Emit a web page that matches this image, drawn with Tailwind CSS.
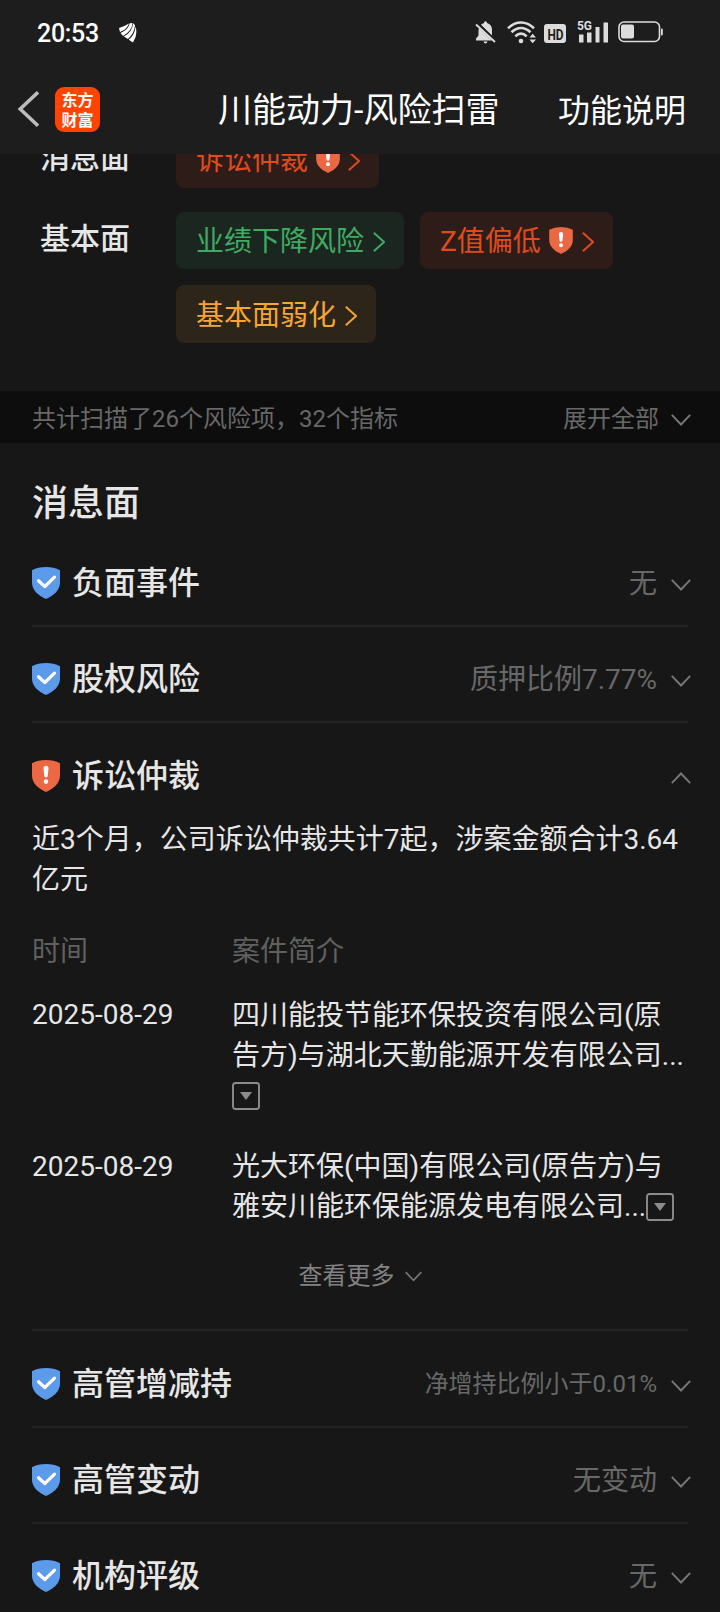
<!DOCTYPE html>
<html lang="zh-CN">

<head>
    <meta charset="UTF-8">
    <meta name="viewport" content="width=device-width, initial-scale=1.0">
    <title>川能动力-风险扫雷</title>
    <script src="https://cdn.jsdelivr.net/npm/@tailwindcss/browser@4"></script>
</head>

<body class="bg-[#171717] text-[#e6e6e6] font-[Roboto,'Noto_Sans_CJK_SC',sans-serif] h-[1612px] overflow-hidden">
<!-- 图标定义 -->
<svg class="hidden">
    <symbol id="shield-ok" viewBox="0 0 28 32">
        <path d="M0 3.2Q6 0 14 0T28 3.2V15.500C28 23.500 21 29 14 32C7 29 0 23.500 0 15.500Z" fill="#5c9aea"/>
        <path d="M6.500 13.800L12.800 19.500L22.500 10.200" fill="none" stroke="#fff" stroke-width="3.200" stroke-linecap="round" stroke-linejoin="round"/>
    </symbol>
    <symbol id="shield-warn" viewBox="0 0 28 32">
        <path d="M0 3.2Q6 0 14 0T28 3.2V15.500C28 23.500 21 29 14 32C7 29 0 23.500 0 15.500Z" fill="#ea6843"/>
        <path d="M11.500 8.300a2.500 2.500 0 0 1 5 0L15.800 15.800a1.800 1.800 0 0 1-3.600 0Z" fill="#fff"/>
        <circle cx="14" cy="21.600" r="2.300" fill="#fff"/>
    </symbol>
    <symbol id="down" viewBox="0 0 20 12">
        <path d="M.8 .8L10 10.500L19.200 .8" fill="none" stroke="currentColor" stroke-width="1.900"/>
    </symbol>
    <symbol id="right" viewBox="0 0 12 20">
        <path d="M.8 .8L11 10L.8 19.200" fill="none" stroke="currentColor" stroke-width="1.900"/>
    </symbol>
    <symbol id="more" viewBox="0 0 28 28">
        <rect x="1" y="1" width="26" height="26" rx="2.500" fill="none" stroke="#8c8c8c" stroke-width="1.900"/>
        <path d="M8 10H20L14 18Z" fill="#8c8c8c"/>
    </symbol>
</svg>

<header class="bg-[#1d1d1d] h-[154px]">
    <!-- 状态栏 -->
    <div class="h-16 flex items-center justify-between pl-[37px] pr-[57px]">
        <div class="flex items-center">
            <span class="text-[25px] leading-none font-medium text-white tracking-[-0.3px] w-[82px] pt-0.5">20:53</span>
            <svg class="w-[18px] h-[20px] mt-px" viewBox="0 0 18 20" fill="#fff">
                <path d="M0 5Q5 3.500 10 .5Q8 6.500 1 9Z"/>
                <path d="M10.700 .3L13.500 0Q13 8 4 13L1.500 9.900Q9.500 7 10.700 .3Z"/>
                <path d="M14.100 .2L16 2Q15.500 10 9 16L4.800 13.500Q13.500 9 14.100 .2Z"/>
                <path d="M16.600 3.500Q19 12 14 19.500L9.800 16.800Q16 11.500 16.600 3.500Z"/>
            </svg>
        </div>
        <div class="flex items-center text-[#dcdcdc]">
            <!-- 静音 -->
            <svg class="w-[21px] h-[23px]" viewBox="0 0 21 23" fill="currentColor">
                <path d="M6 3.800Q7.300 2.500 9 2.100Q9 .3 10.500 .3T12 2.100Q17 3.500 17 9V14.500ZM4 7L17 19.500H1V17.500L3.500 14.500V10Q3.500 8.500 4 7ZM8.500 20.500H12.500Q12 22.500 10.500 22.500T8.500 20.500Z"/>
                <path d="M1 3.500L20 21" stroke="currentColor" stroke-width="1.800"/>
            </svg>
            <!-- 无线网络 -->
            <svg class="w-[29px] h-[23px] ml-[11px]" viewBox="0 0 29 23" fill="none" stroke="currentColor" stroke-width="2.600">
                <path d="M1 7.300Q7 1.500 14 1.500T27 7.300"/>
                <path d="M4.500 11.300Q9 7 14 7T23.500 11.300"/>
                <path d="M8.300 15.300Q11 12.600 14 12.600T19.700 15.300"/>
                <circle cx="14" cy="20" r="2.300" fill="currentColor" stroke="none"/>
                <path d="M22.500 16.500L25.700 12.800L29 16.500ZM22.500 18.500L25.700 22.200L29 18.500Z" fill="currentColor" stroke="none"/>
            </svg>
            <!-- HD -->
            <span class="ml-2 w-[22px] h-[19px] mt-0.5 rounded-[3px] bg-[#dcdcdc] text-[#1d1d1d] flex items-center justify-center text-[14px] leading-none font-bold"><span class="scale-x-85 scale-y-110 pt-px">HD</span></span>
            <!-- 信号 -->
            <span class="relative ml-[11px] w-[31px] h-[22px]">
                <span class="absolute -top-px left-0 text-[12px] leading-none font-bold tracking-[-0.2px]">5G</span>
                <svg class="w-[31px] h-[22px]" viewBox="0 0 31 22" fill="currentColor">
                    <path d="M2 13.500H6.500V21.500H2ZM10 11.500H14.500V21.500H10ZM18.500 6H22.500V21.500H18.500ZM26.500 1.500H31V21.500H26.500Z"/>
                </svg>
            </span>
            <!-- 电池 -->
            <svg class="w-[45px] h-[22px] ml-[10px]" viewBox="0 0 45 22">
                <rect x="1" y="1" width="40.500" height="19.500" rx="5" fill="none" stroke="currentColor" stroke-width="1.600"/>
                <rect x="3" y="3.500" width="13" height="14" rx="2" fill="currentColor"/>
                <rect x="43" y="7.500" width="1.800" height="7" rx=".9" fill="currentColor"/>
            </svg>
        </div>
    </div>
    <!-- 导航栏 -->
    <div class="h-[90px] flex items-center text-white pr-[34px]">
        <svg class="w-[22px] h-9 ml-[17px] text-[#bcbcbc]" viewBox="0 0 22 36" fill="none" stroke="currentColor" stroke-width="3.500">
            <path d="M21 1.200L3.200 18L21 34.800"/>
        </svg>
        <span class="ml-4 w-[45px] h-[45px] rounded-[9px] bg-[#ff4400] flex flex-col items-center justify-center text-[16px] leading-5 font-bold font-['Noto_Sans_CJK_SC']"><span>东方</span><span>财富</span></span>
        <h1 class="ml-[118px] pt-[3px] text-[34px]">川能动力-风险扫雷</h1>
        <span class="ml-auto pt-[3px] text-[32px]">功能说明</span>
    </div>
</header>

<!-- 风险标签 -->
<section class="h-[237px] overflow-hidden">
    <div class="-mt-[23px] flex flex-col gap-6">
        <div class="flex">
            <span class="w-[176px] pl-10 pt-1 text-[30px] leading-[45px] font-medium">消息面</span>
            <a class="h-[57px] rounded-lg bg-[#2d1c18] text-[#e04b1d] text-[28px] pl-5 pr-[19px] flex items-center"><span class="pt-0.5">诉讼仲裁</span><svg class="w-6 h-[27px] ml-2"><use href="#shield-warn"/></svg><svg class="w-3 h-5 ml-2 mt-0.5"><use href="#right"/></svg></a>
        </div>
        <div class="flex">
            <span class="w-[176px] shrink-0 pl-10 pt-1 text-[30px] leading-[45px] font-medium">基本面</span>
            <div class="flex flex-wrap gap-4">
                <a class="h-[57px] rounded-lg bg-[#1c2620] text-[#3fab62] text-[28px] pl-5 pr-[19px] flex items-center"><span class="pt-0.5">业绩下降风险</span><svg class="w-3 h-5 ml-[9px] mt-0.5"><use href="#right"/></svg></a>
                <a class="h-[57px] rounded-lg bg-[#2d1c18] text-[#e04b1d] text-[28px] pl-5 pr-[19px] flex items-center"><span class="pt-0.5">Z值偏低</span><svg class="w-6 h-[27px] ml-2"><use href="#shield-warn"/></svg><svg class="w-3 h-5 ml-[9px] mt-0.5"><use href="#right"/></svg></a>
                <a class="h-[58px] rounded-lg bg-[#2e251a] text-[#f7a535] text-[28px] pl-5 pr-[19px] flex items-center"><span class="pt-[3px]">基本面弱化</span><svg class="w-3 h-5 ml-[9px] mt-1"><use href="#right"/></svg></a>
            </div>
        </div>
    </div>
</section>

<!-- 扫描统计 -->
<div class="h-[52px] bg-[#0d0d0d] px-8 flex items-center text-2xl text-[#686868]">
    <span class="pt-[3px]">共计扫描了26个风险项，32个指标</span>
    <span class="ml-auto pt-[3px]">展开全部</span>
    <svg class="w-5 h-3 ml-3 -mr-[3px] mt-1.5 text-[#777]"><use href="#down"/></svg>
</div>

<main class="px-8">
    <h2 class="h-[88px] pt-[35px] text-[36px] leading-[52px] font-medium">消息面</h2>

    <div class="h-24 pt-2.5 border-b-2 border-[#222] flex items-center">
        <svg class="w-7 h-8"><use href="#shield-ok"/></svg>
        <h3 class="ml-3 text-[32px] font-medium">负面事件</h3>
        <span class="ml-auto pt-0.5 text-[28px] text-[#686868]">无</span>
        <svg class="w-5 h-3 ml-3.5 -mr-[3px] mt-1 text-[#777]"><use href="#down"/></svg>
    </div>

    <div class="h-24 pt-2.5 border-b-2 border-[#222] flex items-center">
        <svg class="w-7 h-8"><use href="#shield-ok"/></svg>
        <h3 class="ml-3 text-[32px] font-medium">股权风险</h3>
        <span class="ml-auto pt-0.5 text-[28px] text-[#686868]">质押比例7.77%</span>
        <svg class="w-5 h-3 ml-3.5 -mr-[3px] mt-1 text-[#777]"><use href="#down"/></svg>
    </div>

    <!-- 诉讼仲裁（展开） -->
    <div class="h-[608px] border-b-2 border-[#222]">
        <div class="h-[97px] pt-2 flex items-center">
            <svg class="w-7 h-8"><use href="#shield-warn"/></svg>
            <h3 class="ml-3 text-[32px] font-medium">诉讼仲裁</h3>
            <svg class="w-5 h-3 ml-auto -mr-[3px] mt-1 text-[#777] rotate-180"><use href="#down"/></svg>
        </div>
        <p class="text-[28px] leading-10">近3个月，公司诉讼仲裁共计7起，涉案金额合计3.64亿元</p>
        <div class="mt-8 grid grid-cols-[200px_1fr] text-[28px] leading-10 whitespace-nowrap">
            <span class="text-[#606060]">时间</span>
            <span class="text-[#606060]">案件简介</span>
            <span class="mt-[23px]">2025-08-29</span>
            <div class="mt-6">
                四川能投节能环保投资有限公司(原<br>告方)与湖北天勤能源开发有限公司...
                <svg class="w-7 h-7 mt-1.5 mb-[5px]"><use href="#more"/></svg>
            </div>
            <span class="mt-8">2025-08-29</span>
            <div class="mt-8">
                光大环保(中国)有限公司(原告方)与<br>
                <span class="flex items-center">雅安川能环保能源发电有限公司...<svg class="w-7 h-7"><use href="#more"/></svg></span>
            </div>
        </div>
        <div class="mt-[29px] h-10 flex items-center justify-center text-2xl text-[#828282]">
            查看更多<svg class="w-[17px] h-[11px] ml-2.5 text-[#777]"><use href="#down"/></svg>
        </div>
    </div>

    <div class="h-[97px] pt-2.5 border-b-2 border-[#222] flex items-center">
        <svg class="w-7 h-8"><use href="#shield-ok"/></svg>
        <h3 class="ml-3 text-[32px] font-medium">高管增减持</h3>
        <span class="ml-auto pt-px text-2xl text-[#686868]">净增持比例小于0.01%</span>
        <svg class="w-5 h-3 ml-3.5 -mr-[3px] mt-1 text-[#777]"><use href="#down"/></svg>
    </div>

    <div class="h-24 pt-2.5 border-b-2 border-[#222] flex items-center">
        <svg class="w-7 h-8"><use href="#shield-ok"/></svg>
        <h3 class="ml-3 text-[32px] font-medium">高管变动</h3>
        <span class="ml-auto pt-0.5 text-[28px] text-[#686868]">无变动</span>
        <svg class="w-5 h-3 ml-3.5 -mr-[3px] mt-1 text-[#777]"><use href="#down"/></svg>
    </div>

    <div class="h-24 pt-2 flex items-center">
        <svg class="w-7 h-8"><use href="#shield-ok"/></svg>
        <h3 class="ml-3 text-[32px] font-medium">机构评级</h3>
        <span class="ml-auto pt-0.5 text-[28px] text-[#686868]">无</span>
        <svg class="w-5 h-3 ml-3.5 -mr-[3px] mt-1 text-[#777]"><use href="#down"/></svg>
    </div>
</main>
</body>

</html>
